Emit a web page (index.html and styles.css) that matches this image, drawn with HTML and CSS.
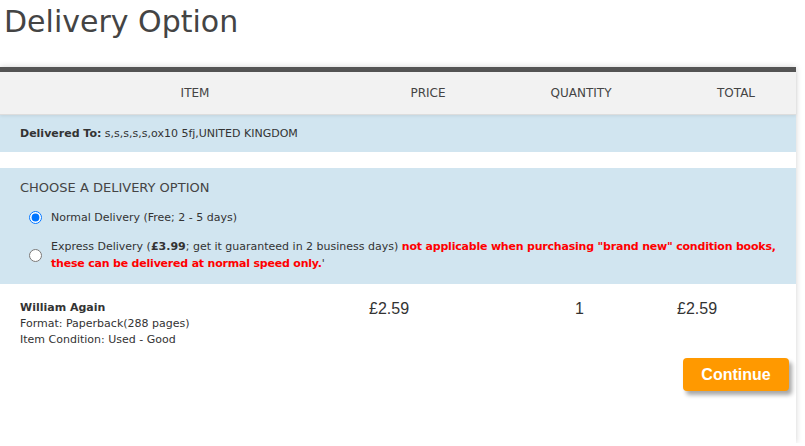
FILE: index.html
```html
<!DOCTYPE html>
<html lang="en">
<head>
    <meta charset="UTF-8">
    <meta name="viewport" content="width=device-width, initial-scale=1.0">
    <title>Delivery Option</title>
    <link rel="stylesheet" href="styles.css">
</head>
<body>
    <h1 class="title">Delivery Option</h1>

    <div class="basket">
        <div class="basket-head">
            <div class="col-item">ITEM</div>
            <div class="col-price">PRICE</div>
            <div class="col-qty">QUANTITY</div>
            <div class="col-total">TOTAL</div>
        </div>

        <div class="delivered">
            <strong>Delivered To:</strong> s,s,s,s,s,ox10 5fj,UNITED KINGDOM
        </div>

        <div class="options">
            <h2>CHOOSE A DELIVERY OPTION</h2>
            <label class="option">
                <input type="radio" name="delivery" checked>
                <span>Normal Delivery (Free; 2 - 5 days)</span>
            </label>
            <label class="option">
                <input type="radio" name="delivery">
                <span class="option-text">
                    <span class="line">Express Delivery (<b>&pound;3.99</b>; get it guaranteed in 2 business days) <b class="warn">not applicable when purchasing "brand new" condition books,</b></span>
                    <span class="line"><b class="warn">these can be delivered at normal speed only.</b>'</span>
                </span>
            </label>
        </div>

        <div class="item-row">
            <div class="item-info">
                <strong>William Again</strong><br>
                Format: Paperback(288 pages)<br>
                Item Condition: Used - Good
            </div>
            <div class="item-price">&pound;2.59</div>
            <div class="item-qty">1</div>
            <div class="item-total">&pound;2.59</div>
        </div>

        <div class="actions">
            <button class="continue">Continue</button>
        </div>
    </div>
</body>
</html>
```

FILE: styles.css
```css
body {
    margin: 0;
    padding: 0;
    font-family: 'DejaVu Sans', Tahoma, sans-serif;
    font-size: 11px;
    color: #333;
    background-color: #fff;
}

.title {
    margin: 0;
    padding: 2px 0 0 4px;
    height: 65px;
    font-family: 'DejaVu Sans', sans-serif;
    font-weight: normal;
    font-size: 30px;
    line-height: 40px;
    color: #444;
}

.basket {
    width: 796px;
    height: 371px;
    border-top: 5px solid #555;
    background-color: #fff;
    box-shadow: 0 0 6px rgba(0, 0, 0, 0.18);
}

.basket-head {
    display: grid;
    grid-template-columns: 390px 76px 230px 80px;
    height: 42px;
    align-items: center;
    text-align: center;
    background-color: #f2f2f2;
    border-bottom: 1px solid #ddd;
    box-shadow: 0 1px 3px rgba(0, 0, 0, 0.08);
    font-size: 12px;
    color: #444;
    position: relative;
}

.delivered {
    height: 37px;
    line-height: 37px;
    padding-left: 20px;
    background-color: #d1e5f0;
    margin-bottom: 16px;
}

.options {
    height: 116px;
    box-sizing: border-box;
    padding: 12px 6px 0 20px;
    background-color: #d1e5f0;
}

.options h2 {
    margin: 0 0 14px 0;
    font-weight: normal;
    font-size: 13px;
    color: #444;
}

.option {
    display: flex;
    align-items: center;
    gap: 9px;
    padding-left: 9px;
    margin-bottom: 12px;
    line-height: 17px;
}

.option input {
    margin: 0;
    width: 13px;
    height: 13px;
    flex-shrink: 0;
}

.option-text {
    display: flex;
    flex-direction: column;
}

.line {
    white-space: nowrap;
}

.warn {
    color: #f00;
    letter-spacing: -0.2px;
}

.item-row {
    display: grid;
    grid-template-columns: 349px 206px 102px 100px;
    padding: 16px 0 0 20px;
    height: 58px;
}

.item-info {
    line-height: 16px;
}

.item-price, .item-qty, .item-total {
    font-family: 'Liberation Sans', Arial, sans-serif;
    font-size: 16px;
    color: #333;
}

.actions {
    display: flex;
    justify-content: flex-end;
    padding-right: 7px;
}

.continue {
    width: 106px;
    height: 33px;
    border: none;
    border-radius: 4px;
    background-color: #ff9900;
    color: #fff;
    font-family: 'Liberation Sans', Arial, sans-serif;
    font-weight: bold;
    font-size: 16px;
    box-shadow: 3px 4px 4px rgba(0, 0, 0, 0.35);
    cursor: pointer;
}
```
